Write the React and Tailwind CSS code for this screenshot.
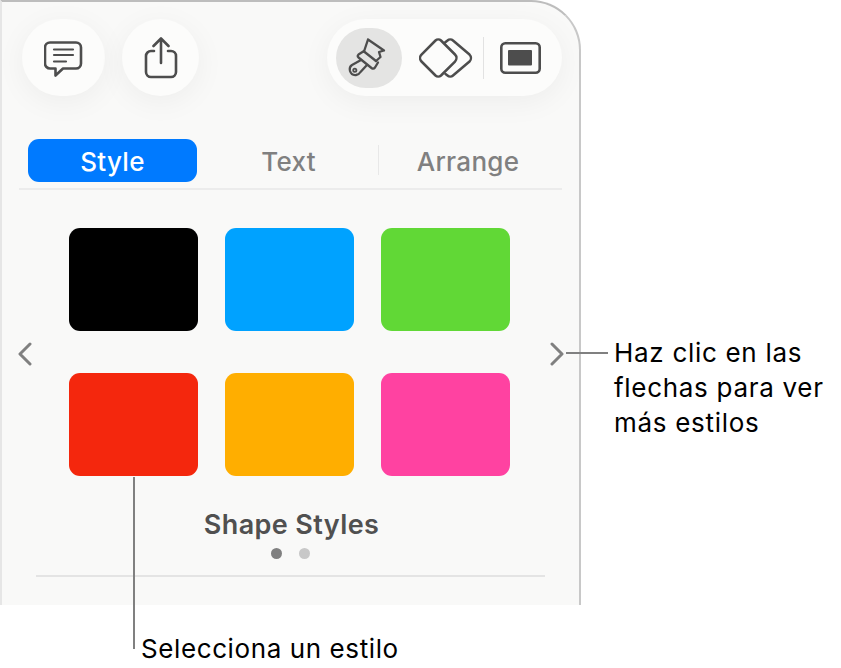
const swatches = [
  "bg-black",
  "bg-[#00a2ff]",
  "bg-[#61d836]",
  "bg-[#f4270d]",
  "bg-[#ffae00]",
  "bg-[#ff42a1]",
];

function CommentIcon() {
  return (
    <svg width="40" height="40" viewBox="0 0 40 40" fill="none" stroke="#4d4d4d" strokeWidth="2.600" strokeLinecap="round" strokeLinejoin="round">
      <path d="M6 4.500h26a5 5 0 0 1 5 5v16a5 5 0 0 1-5 5H19l-7.500 7V30.500H6a5 5 0 0 1-5-5v-16a5 5 0 0 1 5-5z" />
      <path d="M10 11.500h19M10 17h19M10 23.500h12" strokeWidth="2.200" />
    </svg>
  );
}

function ShareIcon() {
  return (
    <svg width="34" height="42" viewBox="0 0 34 42" fill="none" stroke="#4d4d4d" strokeWidth="2.600" strokeLinecap="round" strokeLinejoin="round">
      <path d="M10 14H7a5 5 0 0 0-5 5v16a5 5 0 0 0 5 5h20a5 5 0 0 0 5-5V19a5 5 0 0 0-5-5h-3" />
      <path d="M17 26V2M9.500 9L17 1.500 24.500 9" />
    </svg>
  );
}

function BrushIcon() {
  return (
    <svg width="60" height="55" viewBox="0 0 60 55" fill="none" stroke="#4d4d4d" strokeWidth="2.300" strokeLinecap="round" strokeLinejoin="round">
      <path d="M29 9.500L45 20.500L40 22L41.500 27L37 31M25 21.500L29 9.500" />
      <path d="M25 21L19.500 24.500Q18 26 19.500 27.500L32.500 38Q34.500 39.500 36 37.500L39 32.500" />
      <path d="M25 21.500L37 31" />
      <path d="M22 30L13 35Q10 37 11 41Q12.500 45.500 17 45Q20 44.500 21.500 42L27.500 35.500" />
      <circle cx="15.800" cy="40.300" r="1.600" strokeWidth="1.800" />
    </svg>
  );
}

function LayersIcon() {
  return (
    <svg width="54" height="42" viewBox="0 0 54 42" fill="none" stroke="#4d4d4d" strokeWidth="2.500" strokeLinecap="round" strokeLinejoin="round">
      <path d="M16.500 3.500a4 4 0 0 1 5.500 0L36 17.500a5 5 0 0 1 0 7L22 38.500a4 4 0 0 1-5.500 0L2.500 24.500a5 5 0 0 1 0-7z" />
      <path d="M26 5.500l2.500-2a4 4 0 0 1 5.500 0L50.500 17.500a5 5 0 0 1 0 7L34 38.500a4 4 0 0 1-5.500 0l-2-1.500" />
    </svg>
  );
}

function SlideIcon() {
  return (
    <svg width="41" height="32" viewBox="0 0 41 32" fill="none">
      <rect x="1.300" y="1.300" width="38.400" height="29.400" rx="4" stroke="#4d4d4d" strokeWidth="2.600" />
      <rect x="8" y="8" width="24" height="15.500" rx="1" fill="#4d4d4d" />
    </svg>
  );
}

function Chevron({ flip }) {
  return (
    <svg className="mt-[3px]" width="14" height="24" viewBox="0 0 14 24" fill="none" stroke="#808080" strokeWidth="3" strokeLinecap="round" strokeLinejoin="round">
      <path d={flip ? "M12 2L2 12l10 10" : "M2 2l10 10L2 22"} />
    </svg>
  );
}

export default function App() {
  return (
    <div className="relative h-[668px] w-[841px] overflow-hidden bg-white font-['Inter',sans-serif]">
      {/* Panel */}

      <div className="h-[605px] w-[581px] rounded-tr-[50px] border-t-2 border-r-2 border-l-2 border-t-[#bdbdbd] border-r-[#c8c8c8] border-l-[#e6e6e6] bg-[#f9f9f8] pt-[17px]">

        {/* Toolbar */}

        <div className="flex items-center pl-5 pr-[17px]">
          <button className="flex h-[77px] w-[83px] items-center justify-center rounded-full bg-[#fcfcfb] shadow-[0_6px_30px_rgba(0,0,0,0.05)]">
            <CommentIcon />
          </button>
          <button className="ml-[17px] flex h-[77px] w-[77px] items-center justify-center rounded-full bg-[#fcfcfb] shadow-[0_6px_30px_rgba(0,0,0,0.05)]">
            <ShareIcon />
          </button>
          <div className="ml-auto flex h-[77px] w-[235px] items-center rounded-full bg-[#fcfcfb] pl-[9px] shadow-[0_6px_30px_rgba(0,0,0,0.05)]">
            <div className="flex h-[60px] w-[66px] items-center justify-center rounded-full bg-[#e4e4e3]">
              <BrushIcon />
            </div>
            <div className="ml-[17px]">
              <LayersIcon />
            </div>
            <div className="ml-[10px] h-[42px] w-px bg-[#e2e2e2]" />
            <div className="ml-[16px]">
              <SlideIcon />
            </div>
          </div>
        </div>

        {/* Tabs */}

        <div className="mx-[17px] mt-[43px] flex h-[51px] items-start border-b-2 border-[#ececec] pl-[9px] text-[26px] font-medium tracking-[0.3px] text-[#808080]">
          <div className="flex h-[43px] w-[169px] items-center justify-center rounded-[11px] bg-[#007aff] pt-[2px] text-white">
            Style
          </div>
          <div className="flex h-[43px] w-[183px] items-center justify-center pt-[2px]">Text</div>
          <div className="mt-[6px] -ml-[2px] h-[30px] w-px bg-[#e8e8e8]" />
          <div className="flex h-[43px] w-[178px] items-center justify-center pt-[2px]">Arrange</div>
        </div>

        {/* Swatches */}

        <div className="mt-[38px] flex items-center pl-4">
          <Chevron flip />
          <div className="ml-[37px] grid grid-cols-[129px_129px_129px] gap-x-[27px] gap-y-[42px]">
            {swatches.map((color) => (
              <div key={color} className={`h-[103px] rounded-[11px] ${color}`} />
            ))}
          </div>
          <div className="ml-[40px]">
            <Chevron />
          </div>
        </div>

        <p className="mt-[31px] ml-[2px] text-center text-[27px] font-semibold leading-[36px] tracking-[0.4px] text-[#505050]">
          Shape Styles
        </p>

        <div className="mt-[5px] flex justify-center gap-[17px]">
          <span className="h-[11px] w-[11px] rounded-full bg-[#808080]" />
          <span className="h-[11px] w-[11px] rounded-full bg-[#c8c8c8]" />
        </div>

        <div className="mx-[34px] mt-[16px] h-0.5 bg-[#e4e4e4]" />
      </div>

      {/* Callouts */}

      <div className="absolute left-[566px] top-[352px] h-0.5 w-[42px] bg-[#808080]" />
      <div className="absolute left-[133px] top-[477px] h-[172px] w-0.5 bg-[#808080]" />

      <p className="absolute left-[614px] top-[335px] text-[26px] leading-[35px] tracking-[0.7px] text-black">
        Haz clic en las
        <br />
        flechas para ver
        <br />
        más estilos
      </p>
      <p className="absolute left-[141px] top-[631px] text-[26px] leading-[35px] tracking-[0.6px] text-black">
        Selecciona un estilo
      </p>
    </div>
  );
}
